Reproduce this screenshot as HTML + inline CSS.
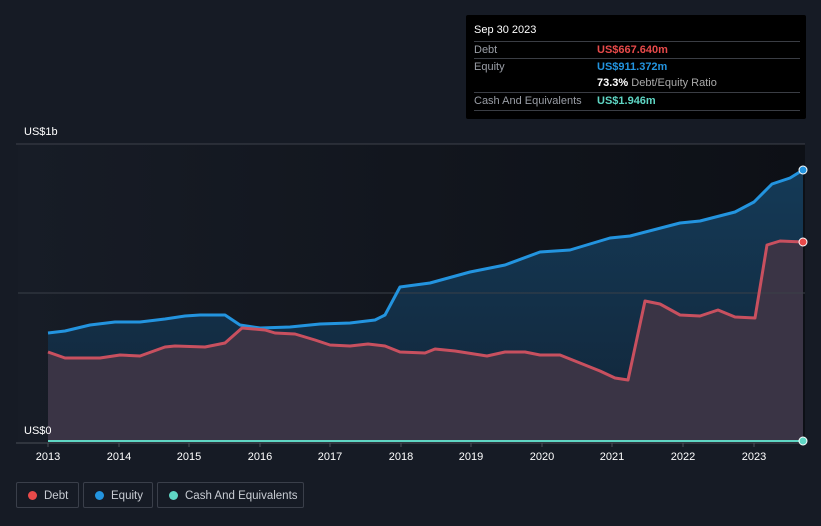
<!DOCTYPE html>
<html><head><meta charset="utf-8"><style>
body{margin:0;width:821px;height:526px;background:#161b25;font-family:"Liberation Sans",sans-serif;overflow:hidden;position:relative}
.t{position:absolute;font-size:11px;color:#fff}
.tip{position:absolute;left:466px;top:15px;width:340px;height:104px;background:#000;border-radius:2px}
.row{position:absolute;left:8px;width:326px;border-top:1px solid #3a3d44;height:17px;font-size:11px;color:#9a9ea6;line-height:17px}
.row span{position:absolute;left:123px}
.leg{position:absolute;top:482px;height:26px;border:1px solid #3a3f4a;border-radius:2px;color:#c8ccd3;font-size:11.5px;line-height:26px;box-sizing:border-box}
.leg i{position:absolute;left:11px;top:8px;width:9px;height:9px;border-radius:50%}
.leg b{font-weight:normal;position:absolute;left:27px}
</style></head><body>
<svg width="821" height="526" style="position:absolute;left:0;top:0">
<defs>
<linearGradient id="bg" x1="0" x2="1" y1="0" y2="0"><stop offset="0" stop-color="#171c26"/><stop offset="1" stop-color="#0d1016"/></linearGradient>
<linearGradient id="eq" x1="0" x2="0" y1="0" y2="1"><stop offset="0" stop-color="#143a57"/><stop offset="1" stop-color="#122538"/></linearGradient>
</defs>
<rect x="18" y="144" width="787" height="298" fill="url(#bg)"/>
<line x1="16" y1="144" x2="805" y2="144" stroke="#3d414a"/>
<path d="M48,333 L65,331 L90,325 L115,322 L140,322 L165,319 L185,316 L200,315 L225,315 L240,325 L260,328 L290,327 L320,324 L350,323 L375,320 L385,315 L400,287 L430,283 L470,272 L505,265 L540,252 L570,250 L610,238 L630,236 L680,223 L700,221 L735,212 L754,202 L772,184 L790,178 L803,170 L803,442 L48,442Z" fill="url(#eq)"/>
<path d="M48,352 L65,358 L100,358 L120,355 L140,356 L165,347 L175,346 L205,347 L225,343 L242,328 L265,330 L275,333 L295,334 L315,340 L330,345 L350,346 L368,344 L385,346 L400,352 L425,353 L435,349 L455,351 L487,356 L505,352 L525,352 L540,355 L560,355 L585,365 L600,371 L615,378 L628,380 L645,301 L660,304 L680,315 L700,316 L718,310 L735,317 L755,318 L767,245 L780,241 L803,242 L803,442 L48,442Z" fill="#3a3445"/>
<line x1="18" y1="293" x2="805" y2="293" stroke="#3a3f48" stroke-width="1"/>
<path d="M48,333 L65,331 L90,325 L115,322 L140,322 L165,319 L185,316 L200,315 L225,315 L240,325 L260,328 L290,327 L320,324 L350,323 L375,320 L385,315 L400,287 L430,283 L470,272 L505,265 L540,252 L570,250 L610,238 L630,236 L680,223 L700,221 L735,212 L754,202 L772,184 L790,178 L803,170" fill="none" stroke="#2394df" stroke-width="3" stroke-linejoin="round"/>
<path d="M48,352 L65,358 L100,358 L120,355 L140,356 L165,347 L175,346 L205,347 L225,343 L242,328 L265,330 L275,333 L295,334 L315,340 L330,345 L350,346 L368,344 L385,346 L400,352 L425,353 L435,349 L455,351 L487,356 L505,352 L525,352 L540,355 L560,355 L585,365 L600,371 L615,378 L628,380 L645,301 L660,304 L680,315 L700,316 L718,310 L735,317 L755,318 L767,245 L780,241 L803,242" fill="none" stroke="#c8505f" stroke-width="3" stroke-linejoin="round"/>
<line x1="48" y1="441" x2="803" y2="441" stroke="#5fd6c4" stroke-width="2"/>
<line x1="16" y1="443" x2="805" y2="443" stroke="#4a4f58"/>
<g stroke="#4a4f58"><line x1="48" y1="443" x2="48" y2="447"/><line x1="119" y1="443" x2="119" y2="447"/><line x1="189" y1="443" x2="189" y2="447"/><line x1="260" y1="443" x2="260" y2="447"/><line x1="330" y1="443" x2="330" y2="447"/><line x1="401" y1="443" x2="401" y2="447"/><line x1="471" y1="443" x2="471" y2="447"/><line x1="542" y1="443" x2="542" y2="447"/><line x1="612" y1="443" x2="612" y2="447"/><line x1="683" y1="443" x2="683" y2="447"/><line x1="754" y1="443" x2="754" y2="447"/></g>
<circle cx="803" cy="170" r="4" fill="#2394df" stroke="#fff" stroke-width="1"/>
<circle cx="803" cy="242" r="4" fill="#e84a4a" stroke="#fff" stroke-width="1"/>
<circle cx="803" cy="441" r="4" fill="#5fd6c4" stroke="#fff" stroke-width="1"/>
<g fill="#fff" font-size="11" font-family="Liberation Sans" text-anchor="middle">
<text x="48" y="460">2013</text><text x="119" y="460">2014</text><text x="189" y="460">2015</text><text x="260" y="460">2016</text><text x="330" y="460">2017</text><text x="401" y="460">2018</text><text x="471" y="460">2019</text><text x="542" y="460">2020</text><text x="612" y="460">2021</text><text x="683" y="460">2022</text><text x="754" y="460">2023</text>
</g>
</svg>
<div class="t" style="left:24px;top:126px">US$1b</div>
<div class="t" style="left:24px;top:425px">US$0</div>
<div class="tip">
<div style="position:absolute;left:8px;top:9px;color:#fff;font-size:11px">Sep 30 2023</div>
<div class="row" style="top:26px">Debt<span style="color:#e84a4a;font-weight:bold">US$667.640m</span></div>
<div class="row" style="top:43px">Equity<span style="color:#2394df;font-weight:bold">US$911.372m</span></div>
<div class="row" style="top:60px;border-top:none"><span style="color:#aaa"><b style="color:#fff">73.3%</b> Debt/Equity Ratio</span></div>
<div class="row" style="top:77px">Cash And Equivalents<span style="color:#5fd6c4;font-weight:bold">US$1.946m</span></div>
<div class="row" style="top:95px;height:0"></div>
</div>
<div class="leg" style="left:16px;width:63px"><i style="background:#e84a4a"></i><b>Debt</b></div>
<div class="leg" style="left:83px;width:70px"><i style="background:#2394df"></i><b>Equity</b></div>
<div class="leg" style="left:157px;width:147px"><i style="background:#5fd6c4"></i><b>Cash And Equivalents</b></div>
</body></html>
